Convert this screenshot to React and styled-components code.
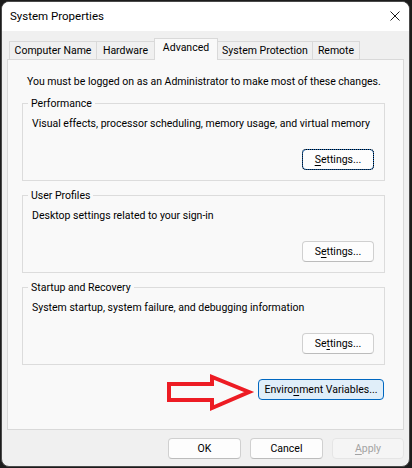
import React from 'react'
import styled, { createGlobalStyle, css } from 'styled-components'

const GlobalStyle = createGlobalStyle`
  body {
    margin: 0;
    background: #1c1c1c;
    font-family: Roboto, "Noto Sans", "Liberation Sans", sans-serif;
    font-size: 10.5px;
    color: #000;
  }
`

const tabs = [
  { label: 'Computer Name', width: 88 },
  { label: 'Hardware', width: 59 },
  { label: 'Advanced', width: 64, active: true },
  { label: 'System Protection', width: 96 },
  { label: 'Remote', width: 48 },
]

const groups = [
  {
    title: 'Performance',
    text: 'Visual effects, processor scheduling, memory usage, and virtual memory',
    button: <><u>S</u>ettings...</>,
    focused: true,
  },
  {
    title: 'User Profiles',
    text: 'Desktop settings related to your sign-in',
    button: <>S<u>e</u>ttings...</>,
  },
  {
    title: 'Startup and Recovery',
    text: 'System startup, system failure, and debugging information',
    button: <>Se<u>t</u>tings...</>,
  },
]

export default function App() {
  return (
    <>
      <GlobalStyle />
      <Window>
        <TitleBar>
          <span>System Properties</span>
          <svg width="10" height="10" viewBox="0 0 10 10">
            <path d="M0.5 0.5 L9.5 9.5 M9.5 0.5 L0.5 9.5" stroke="#1a1a1a" strokeWidth="1" fill="none" />
          </svg>
        </TitleBar>
        <Body>
          <TabRow>
            {tabs.map((t) => (
              <Tab key={t.label} $width={t.width} $active={t.active}>
                {t.label}
              </Tab>
            ))}
          </TabRow>
          <Panel>
            <Notice>You must be logged on as an Administrator to make most of these changes.</Notice>
            {groups.map((g) => (
              <Group key={g.title}>
                <legend>{g.title}</legend>
                <Desc>{g.text}</Desc>
                <ButtonRow>
                  <Button $focused={g.focused}>{g.button}</Button>
                </ButtonRow>
              </Group>
            ))}
            <EnvRow>
              <Button $width={126} $primary>
                Enviro<u>n</u>ment Variables...
              </Button>
            </EnvRow>
          </Panel>
          <Footer>
            <Button $width={73}>OK</Button>
            <Button $width={73}>Cancel</Button>
            <Button $width={72} disabled>
              <u>A</u>pply
            </Button>
          </Footer>
        </Body>
        <Arrow width="100" height="50" viewBox="160 368 100 50">
          <polygon
            points="169,384 212,384 212,377 249,392 212,408 212,400 169,400"
            fill="none"
            stroke="#ed1c24"
            strokeWidth="4"
            strokeLinejoin="miter"
          />
        </Arrow>
      </Window>
    </>
  )
}

const Window = styled.div`
  position: relative;
  box-sizing: border-box;
  margin: 1px 0 0 1px;
  width: 409px;
  height: 466px;
  border: 1px solid #4a4a4a;
  border-radius: 8px;
  overflow: hidden;
  background: #f0f0f0;
  display: flex;
  flex-direction: column;
`

const TitleBar = styled.div`
  height: 28px;
  flex-shrink: 0;
  background: #ffffff;
  display: flex;
  align-items: center;
  justify-content: space-between;
  padding: 0 9px 1px 8px;
  font-size: 11.5px;
  svg {
    display: block;
  }
`

const Body = styled.div`
  padding: 7px 5px 0 5px;
  display: flex;
  flex-direction: column;
`

const TabRow = styled.div`
  display: flex;
  align-items: flex-end;
  height: 21px;
  padding-left: 2px;
`

const Tab = styled.div`
  box-sizing: border-box;
  width: ${(p) => p.$width}px;
  height: 18px;
  margin-left: -1px;
  &:first-child {
    margin-left: 0;
  }
  padding-top: 1px;
  line-height: 16px;
  text-align: center;
  white-space: nowrap;
  border: 1px solid #d9d9d9;
  border-bottom: none;
  background: #f0f0f0;
  ${(p) =>
    p.$active &&
    css`
      height: 22px;
      margin-bottom: -1px;
      background: #f9f9f9;
      position: relative;
      z-index: 1;
    `}
`

const Panel = styled.div`
  box-sizing: border-box;
  height: 371px;
  border: 1px solid #d9d9d9;
  background: #f9f9f9;
  padding: 14px 18px 0 14px;
  display: flex;
  flex-direction: column;
`

const Notice = styled.div`
  margin-left: 5px;
  line-height: 16px;
  white-space: nowrap;
`

const Group = styled.fieldset`
  margin: 5px 0 0;
  padding: 0 10px 10px 9px;
  border: 1px solid #dcdcdc;
  min-width: 0;
  & + & {
    margin-top: 6px;
  }
  legend {
    margin-left: -4px;
    padding: 0 3px;
    line-height: 17px;
  }
`

const Desc = styled.div`
  margin-top: 4px;
  line-height: 16px;
  white-space: nowrap;
`

const ButtonRow = styled.div`
  margin-top: 17px;
  display: flex;
  justify-content: flex-end;
`

const Button = styled.button`
  box-sizing: border-box;
  width: ${(p) => p.$width || 72}px;
  height: 21px;
  padding: 0;
  font-family: inherit;
  font-size: 10.5px;
  color: #000;
  background: #fdfdfd;
  border: 1px solid #d0d0d0;
  border-bottom-color: #bcbcbc;
  border-radius: 4px;
  white-space: nowrap;
  u {
    text-underline-offset: 2px;
  }
  ${(p) =>
    p.$focused &&
    css`
      border-color: #1f6fc0;
      outline: 1px dotted #000;
      outline-offset: -1px;
    `}
  ${(p) =>
    p.$primary &&
    css`
      background: #e0eef9;
      border-color: #0067c0;
    `}
  &:disabled {
    color: #a3a3a3;
    background: #f5f5f5;
    border-color: #e5e5e5;
  }
`

const EnvRow = styled.div`
  margin-top: 14px;
  padding-right: 1px;
  display: flex;
  justify-content: flex-end;
`

const Footer = styled.div`
  margin-top: 8px;
  display: flex;
  justify-content: flex-end;
  gap: 9px;
`

const Arrow = styled.svg`
  position: absolute;
  left: 158px;
  top: 366px;
  display: block;
`
